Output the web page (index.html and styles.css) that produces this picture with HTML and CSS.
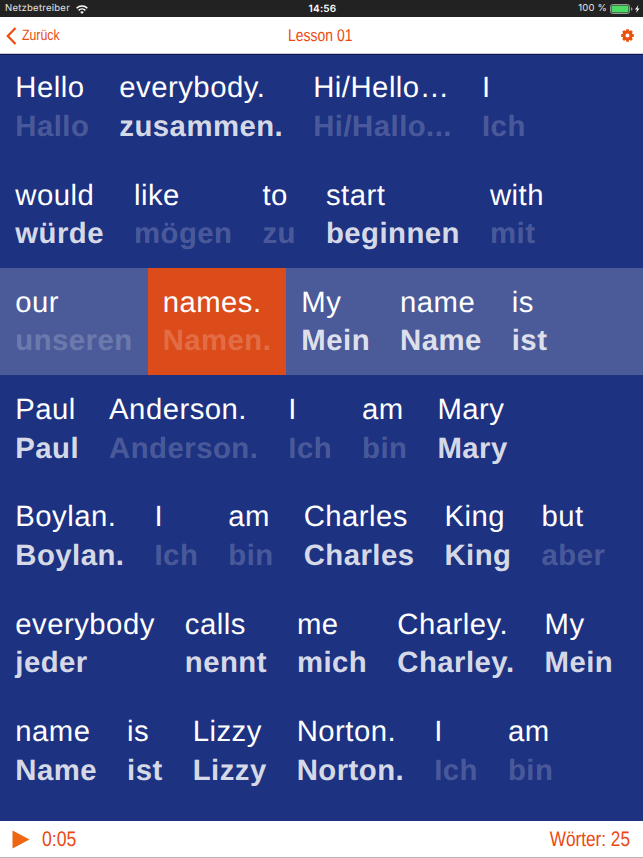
FILE: index.html
```html
<!DOCTYPE html>
<html lang="de">
<head>
<meta charset="utf-8">
<title>Lesson 01</title>
<link rel="stylesheet" href="styles.css">
</head>
<body>
<div class="status">
  <div class="carrier"><span>Netzbetreiber</span>
    <svg width="12" height="9" viewBox="0 0 12 9" fill="none" stroke="#fff" stroke-width="1.6"><path d="M.6 3.2C3.6.2 8.4.2 11.4 3.2M2.6 5.3c1.9-1.8 4.9-1.8 6.8 0"/><path d="M6 9 4.2 7.1Q6 5.6 7.8 7.1Z" fill="#fff" stroke="none"/></svg>
  </div>
  <div class="clock">14:56</div>
  <div class="power"><span>100 %</span>
    <svg width="30" height="10" viewBox="0 0 30 10"><rect x=".5" y=".5" width="19" height="9" rx="2" fill="#222" stroke="#999"/><rect x="1.5" y="1.5" width="17" height="7" rx="1" fill="#4cd964"/><path d="M21 3.2q1.5.3 1.5 1.8T21 6.8z" fill="#999"/><path d="M28.4 1 25 5.5h2L26 9l3.5-4.6h-2.1z" fill="#fff"/></svg>
  </div>
</div>
<header class="nav">
  <div class="back"><svg width="11" height="18" viewBox="0 0 11 18" fill="none" stroke="#ea500f" stroke-width="2.3"><path d="M9.5 1 1.8 9l7.7 8"/></svg><span class="cond">Zurück</span></div>
  <h1 class="cond title">Lesson 01</h1>
  <svg class="gear" width="13" height="13" viewBox="-6.5 -6.5 13 13"><g stroke="#ea500f" stroke-width="2.8"><path d="M0-6.3V6.3M-6.3 0H6.3M-4.4-4.4 4.4 4.4M4.4-4.4-4.4 4.4"/></g><circle r="3.5" fill="#fff" stroke="#ea500f" stroke-width="3"/></svg>
</header>
<main class="lesson">
  <div class="row">
    <div class="word"><span>Hello</span><b class="dim">Hallo</b></div>
    <div class="word"><span>everybody.</span><b>zusammen.</b></div>
    <div class="word"><span>Hi/Hello…</span><b class="dim">Hi/Hallo...</b></div>
    <div class="word"><span>I</span><b class="dim">Ich</b></div>
  </div>
  <div class="row">
    <div class="word"><span>would</span><b>würde</b></div>
    <div class="word"><span>like</span><b class="dim">mögen</b></div>
    <div class="word"><span>to</span><b class="dim">zu</b></div>
    <div class="word"><span>start</span><b>beginnen</b></div>
    <div class="word"><span>with</span><b class="dim">mit</b></div>
  </div>
  <div class="row current">
    <div class="word"><span>our</span><b class="dim">unseren</b></div>
    <div class="word active"><span>names.</span><b class="dim">Namen.</b></div>
    <div class="word"><span>My</span><b>Mein</b></div>
    <div class="word"><span>name</span><b>Name</b></div>
    <div class="word"><span>is</span><b>ist</b></div>
  </div>
  <div class="row">
    <div class="word"><span>Paul</span><b>Paul</b></div>
    <div class="word"><span>Anderson.</span><b class="dim">Anderson.</b></div>
    <div class="word"><span>I</span><b class="dim">Ich</b></div>
    <div class="word"><span>am</span><b class="dim">bin</b></div>
    <div class="word"><span>Mary</span><b>Mary</b></div>
  </div>
  <div class="row">
    <div class="word"><span>Boylan.</span><b>Boylan.</b></div>
    <div class="word"><span>I</span><b class="dim">Ich</b></div>
    <div class="word"><span>am</span><b class="dim">bin</b></div>
    <div class="word"><span>Charles</span><b>Charles</b></div>
    <div class="word"><span>King</span><b>King</b></div>
    <div class="word"><span>but</span><b class="dim">aber</b></div>
  </div>
  <div class="row">
    <div class="word"><span>everybody</span><b>jeder</b></div>
    <div class="word"><span>calls</span><b>nennt</b></div>
    <div class="word"><span>me</span><b>mich</b></div>
    <div class="word"><span>Charley.</span><b>Charley.</b></div>
    <div class="word"><span>My</span><b>Mein</b></div>
  </div>
  <div class="row">
    <div class="word"><span>name</span><b>Name</b></div>
    <div class="word"><span>is</span><b>ist</b></div>
    <div class="word"><span>Lizzy</span><b>Lizzy</b></div>
    <div class="word"><span>Norton.</span><b>Norton.</b></div>
    <div class="word"><span>I</span><b class="dim">Ich</b></div>
    <div class="word"><span>am</span><b class="dim">bin</b></div>
  </div>
</main>
<footer class="player">
  <div class="time"><svg width="18" height="19" viewBox="0 0 18 19"><path d="M.5.5v18L17.5 9.5z" fill="#ee6611"/></svg><span class="cond">0:05</span></div>
  <span class="cond count">Wörter: 25</span>
</footer>
</body>
</html>
```
FILE: styles.css
```css
* { box-sizing: border-box; }
body {
  margin: 0;
  height: 858px;
  display: flex;
  flex-direction: column;
  overflow: hidden;
  font-family: "Liberation Sans", Arial, sans-serif;
  text-rendering: geometricPrecision;
  background: #fff;
}
svg { display: block; flex: none; }
.status {
  height: 17px;
  flex: none;
  display: grid;
  grid-template-columns: 1fr auto 1fr;
  align-items: center;
  padding: 1px 3px 0 5px;
  background: #222;
  color: #e4e4e4;
  font: 9.5px/16px Inter, sans-serif;
  letter-spacing: .25px;
}
.carrier, .power { display: flex; align-items: center; gap: 6px; }
.power { justify-content: flex-end; gap: 3px; letter-spacing: .2px; }
.clock { font-weight: 600; font-size: 10px; letter-spacing: .2px; color: #fff; }
.nav {
  height: 38px;
  flex: none;
  display: grid;
  grid-template-columns: 1fr auto 1fr;
  align-items: center;
  padding: 0 9px 0 6px;
  border-bottom: 1px solid #10194f;
  box-shadow: inset 0 -1px #c5cad8;
}
.cond {
  display: block;
  font-weight: 400;
  color: #ea4a12;
  white-space: nowrap;
  transform: scaleX(.82);
  transform-origin: left;
}
.back { display: flex; align-items: center; gap: 5px; font-size: 15px; }
.title { margin: 0; font-size: 17px; transform-origin: center; }
.gear { justify-self: end; }
.lesson { height: 766px; flex: none; background: #1e3282; }
.row { display: flex; height: 107.3px; padding-left: .3px; }
.row:first-child { height: 105.9px; margin-top: 0; }
.row:first-child .word { padding-top: 14.3px; }
.current { background: #4b5b9a; }
.word {
  padding: 15.7px 15px 0;
  font-size: 29.3px;
  line-height: 38.6px;
  letter-spacing: .48px;
  color: #fff;
  white-space: nowrap;
}
.word span, .word b { display: block; }
.word b { color: rgba(255, 255, 255, .84); }
.word b.dim { color: rgba(255, 255, 255, .21); }
.active { background: #dc4b1a; }
.player {
  height: 37px;
  flex: none;
  display: flex;
  align-items: center;
  justify-content: space-between;
  padding: 1px 13px 0 12px;
  border-bottom: 1px solid #b5b5b5;
  font-size: 21px;
}
.time .cond { transform: scaleX(.84); }
.count { transform-origin: right; }
.time { display: flex; align-items: center; gap: 12px; }
```
